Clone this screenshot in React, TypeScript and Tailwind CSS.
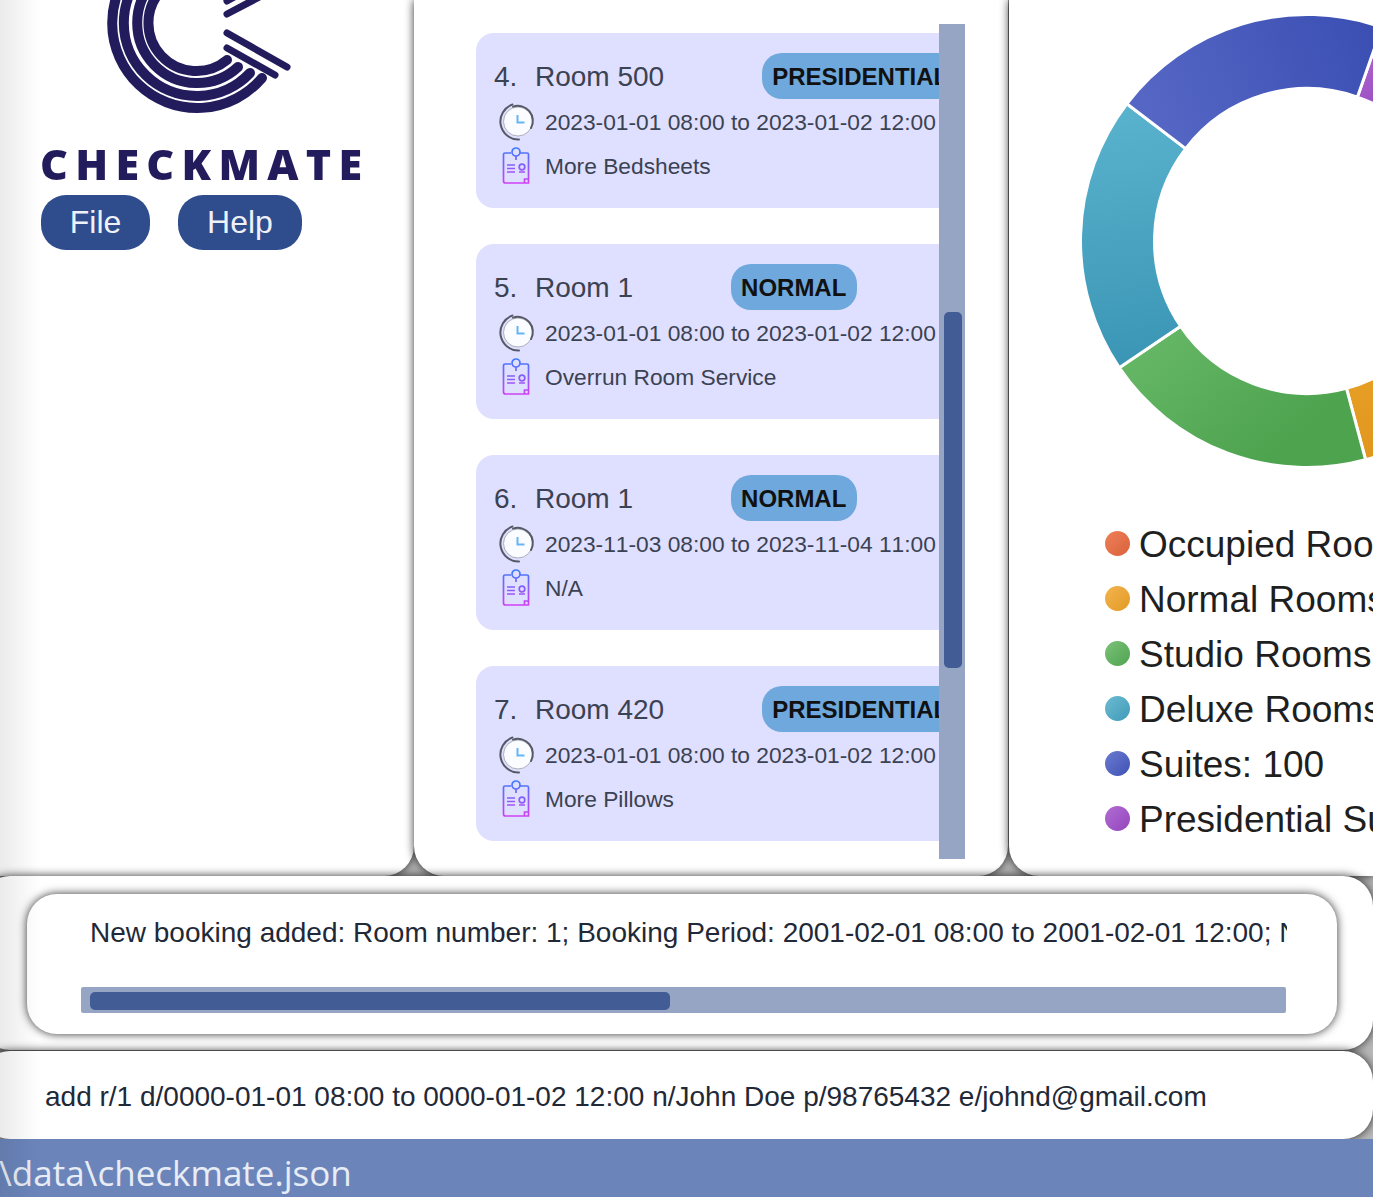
const bookings = [
  { no: "4.", room: "Room 500", type: "PRESIDENTIAL", period: "2023-01-01 08:00 to 2023-01-02 12:00", note: "More Bedsheets" },
  { no: "5.", room: "Room 1", type: "NORMAL", period: "2023-01-01 08:00 to 2023-01-02 12:00", note: "Overrun Room Service" },
  { no: "6.", room: "Room 1", type: "NORMAL", period: "2023-11-03 08:00 to 2023-11-04 11:00", note: "N/A" },
  { no: "7.", room: "Room 420", type: "PRESIDENTIAL", period: "2023-01-01 08:00 to 2023-01-02 12:00", note: "More Pillows" },
];

const legend = [
  { label: "Occupied Rooms", dot: "from-[#ef8059] to-[#d9623c]" },
  { label: "Normal Rooms", dot: "from-[#f3b44e] to-[#e39a20]" },
  { label: "Studio Rooms", dot: "from-[#7cc27a] to-[#4fa34f]" },
  { label: "Deluxe Rooms", dot: "from-[#6cbcd2] to-[#3f9ab8]" },
  { label: "Suites: 100", dot: "from-[#6a7bd0] to-[#4152b4]" },
  { label: "Presidential Suites", dot: "from-[#b26cd2] to-[#9346bd]" },
];

const slices = [
  { from: 19.3, to: 60, fill: "url(#purple)" },
  { from: 60, to: 120, fill: "#e5684a" },
  { from: 120, to: 165, fill: "url(#orange)" },
  { from: 165, to: 236, fill: "url(#green)" },
  { from: 236, to: 307.3, fill: "url(#teal)" },
  { from: 307.3, to: 379.3, fill: "url(#blue)" },
];

function point(r: number, deg: number) {
  const a = (deg * Math.PI) / 180;
  return `${225 + r * Math.sin(a)} ${225 - r * Math.cos(a)}`;
}

function slicePath(from: number, to: number) {
  return `M${point(226.5, from)} A226.5 226.5 0 0 1 ${point(226.5, to)} L${point(152.5, to)} A152.5 152.5 0 0 0 ${point(152.5, from)} Z`;
}

function Donut() {
  return (
    <svg viewBox="0 0 450 450" className="ml-[73px] mt-[16px] h-[450px] w-[450px] shrink-0 overflow-visible">
      <defs>
        <linearGradient id="blue" gradientUnits="userSpaceOnUse" x1="70" y1="100" x2="290" y2="10">
          <stop offset="0" stopColor="#5566c4" />
          <stop offset="1" stopColor="#3b4fb3" />
        </linearGradient>
        <linearGradient id="teal" gradientUnits="userSpaceOnUse" x1="30" y1="90" x2="70" y2="350">
          <stop offset="0" stopColor="#5ab3cd" />
          <stop offset="1" stopColor="#3a95b5" />
        </linearGradient>
        <linearGradient id="green" gradientUnits="userSpaceOnUse" x1="80" y1="310" x2="190" y2="440">
          <stop offset="0" stopColor="#65b765" />
          <stop offset="1" stopColor="#4ea34f" />
        </linearGradient>
        <linearGradient id="orange" gradientUnits="userSpaceOnUse" x1="270" y1="380" x2="290" y2="450">
          <stop offset="0" stopColor="#e69d24" />
          <stop offset="1" stopColor="#e0961c" />
        </linearGradient>
        <linearGradient id="purple" gradientUnits="userSpaceOnUse" x1="280" y1="60" x2="300" y2="90">
          <stop offset="0" stopColor="#a85ccb" />
          <stop offset="1" stopColor="#9a4fc2" />
        </linearGradient>
      </defs>
      {slices.map((s) => (
        <path key={s.from} d={slicePath(s.from, s.to)} fill={s.fill} stroke="#ffffff" strokeWidth="3" />
      ))}
    </svg>
  );
}

function Logo() {
  return (
    <svg viewBox="0 0 414 130" className="h-[130px] w-[414px] shrink-0 blur-[0.6px]" fill="none" stroke="#231c5c" strokeLinecap="round">
      <g strokeWidth="10">
        <path d="M227 60 A48 48 0 1 1 227 -14" />
        <path d="M238 67 A60 60 0 1 1 238 -21" />
        <path d="M250 73 A73 73 0 1 1 250 -27" />
        <path d="M262 78 A85 85 0 1 1 262 -32" />
      </g>
      <g strokeWidth="7">
        <path d="M227 33 L287 67" />
        <path d="M227 48 L275 75" />
        <path d="M227 14 L265 -6" />
        <path d="M227 1 L245 -9" />
      </g>
    </svg>
  );
}

function ClockIcon() {
  return (
    <svg viewBox="0 0 38 38" className="-ml-px h-[38px] w-[38px] shrink-0" fill="none">
      <circle cx="21" cy="18.5" r="14.5" fill="#fbfcff" stroke="#9a9da8" strokeWidth="0.8" />
      <path d="M16 3.6 A15 15 0 0 1 34 25" stroke="#555a66" strokeWidth="2" strokeLinecap="round" />
      <path d="M15.5 1.5 A18 18 0 0 0 22 36.5" stroke="#555a66" strokeWidth="2" strokeLinecap="round" />
      <path d="M20.5 12 V19.5 H27.5" stroke="#64b5f6" strokeWidth="2" />
    </svg>
  );
}

function NoteIcon() {
  return (
    <svg viewBox="0 0 30 38" className="h-[38px] w-[30px] shrink-0" fill="none">
      <defs>
        <linearGradient id="note" gradientUnits="userSpaceOnUse" x1="15" y1="0" x2="15" y2="38">
          <stop offset="0" stopColor="#3a7cff" />
          <stop offset="1" stopColor="#d63ff5" />
        </linearGradient>
      </defs>
      <g stroke="url(#note)" strokeWidth="1.7">
        <path d="M10 6 H4 Q2.5 6 2.5 7.5 V34 Q2.5 36 4.5 36 H27.5 V7.5 Q27.5 6 26 6 H19" />
        <circle cx="15" cy="5" r="4" />
        <path d="M15 9 V13" />
        <path d="M23.5 36 V32 H27.5" />
        <path d="M6 18 H14 M6 21.5 H14 M6 25 H14 M18 25 H24" />
        <circle cx="21" cy="20" r="2.8" />
      </g>
    </svg>
  );
}

function BookingCard({ no, room, type, period, note }: (typeof bookings)[number]) {
  return (
    <div className="h-[175px] w-[500px] shrink-0 rounded-[18px] bg-[#dfdfff] pl-[18px] text-[#3b4252]">
      <div className="flex h-[66px] items-end">
        <div className="flex h-[46px] items-center">
          <span className="w-[41px] pt-[2px] text-[28px]">{no}</span>
          <span className="pt-[2px] text-[28px]">{room}</span>
          <span className="ml-[98px] flex h-[46px] items-center rounded-[20px] bg-[#6fa8dc] pl-[10px] pr-[11px] pt-[2px] text-[24px] font-bold text-[#111111]">
            {type}
          </span>
        </div>
      </div>
      <div className="flex h-[46px] items-center pl-[4px]">
        <ClockIcon />
        <span className="ml-[10px] whitespace-nowrap text-[22.75px]">{period}</span>
      </div>
      <div className="flex h-[44px] items-center pb-[2px] pl-[7px]">
        <NoteIcon />
        <span className="ml-[14px] whitespace-nowrap text-[22.75px]">{note}</span>
      </div>
    </div>
  );
}

export default function App() {
  return (
    <div className="relative flex h-[1197px] w-full flex-col overflow-hidden bg-[#b8b8b8] font-['Liberation_Sans',Arial,sans-serif] [font-kerning:none]">
      <div className="flex h-[876px] shrink-0">
        {/* menu side */}
        <div className="w-[414px] shrink-0 rounded-br-[30px] bg-white shadow-[0_0_10px_rgba(0,0,0,0.8)]">
          <Logo />
          <div className="mt-[11px] pl-[40px] font-['Open_Sans',sans-serif] text-[43px] font-extrabold leading-[46px] tracking-[7.3px] text-[#231c5c] blur-[0.7px]">
            CHECKMATE
          </div>
          <div className="mt-[8px] flex gap-[28px] pl-[41px]">
            <div className="flex h-[55px] w-[109px] items-center justify-center rounded-[25px] bg-[#2f4c8d] pb-[2px] text-[32px] text-[#eef1f8]">File</div>
            <div className="flex h-[55px] w-[124px] items-center justify-center rounded-[25px] bg-[#2f4c8d] pb-[2px] text-[32px] text-[#eef1f8]">Help</div>
          </div>
        </div>

        {/* booking list */}
        <div className="w-[594px] shrink-0 rounded-b-[30px] bg-white pl-[62px] pt-[24px] shadow-[0_0_10px_rgba(0,0,0,0.8)]">
          <div className="flex h-[835px] w-[489px]">
            <div className="flex w-[463px] flex-col gap-[36px] overflow-hidden pt-[9px]">
              {bookings.map((b) => (
                <BookingCard key={b.no} {...b} />
              ))}
            </div>
            <div className="w-[26px] bg-[#97a5c5] pl-[5px] pt-[288px]">
              <div className="h-[356px] w-[18px] rounded-[5px] bg-[#425d95]" />
            </div>
          </div>
        </div>

        {/* room stats */}
        <div className="ml-px min-w-0 flex-1 overflow-hidden rounded-bl-[30px] bg-white shadow-[0_0_10px_rgba(0,0,0,0.8)]">
          <Donut />
          <div className="ml-[96px] mt-[50px] flex w-[400px] flex-col">
            {legend.map((l) => (
              <div key={l.label} className="flex h-[55px] items-center whitespace-nowrap text-[37px] text-[#1f1f1f]">
                <span className={`mr-[9px] h-[25px] w-[25px] shrink-0 rounded-full bg-gradient-to-br ${l.dot}`} />
                <span className="pt-[3px]">{l.label}</span>
              </div>
            ))}
          </div>
        </div>
      </div>

      {/* result box */}
      <div className="-ml-[20px] h-[174px] w-[1393px] shrink-0 rounded-[30px] bg-white pl-[47px] pt-[18px] shadow-[0_0_10px_rgba(0,0,0,0.8)]">
        <div className="h-[140px] w-[1310px] rounded-[30px] bg-white pl-[54px] pt-[20px] shadow-[0_0_10px_rgba(0,0,0,0.8)]">
          <div className="w-[1206px] overflow-hidden whitespace-nowrap pl-[9px] text-[28px] leading-[38px] text-[#1f2937]">
            New booking added: Room number: 1; Booking Period: 2001-02-01 08:00 to 2001-02-01 12:00; Name: John Doe
          </div>
          <div className="mt-[35px] h-[26px] w-[1205px] rounded-[2px] bg-[#97a5c5] pl-[9px] pt-[5px]">
            <div className="h-[18px] w-[580px] rounded-[5px] bg-[#425d95]" />
          </div>
        </div>
      </div>

      {/* command box */}
      <div className="-ml-[20px] mt-px flex h-[88px] w-[1393px] shrink-0 items-center rounded-[30px] bg-white pl-[65px] pt-[3px] text-[28px] text-[#1f2937] shadow-[0_0_10px_rgba(0,0,0,0.8)]">
        add r/1 d/0000-01-01 08:00 to 0000-01-02 12:00 n/John Doe p/98765432 e/johnd@gmail.com
      </div>

      {/* status bar */}
      <div className="flex h-[58px] shrink-0 items-center overflow-hidden bg-[#6b85bb] pt-[10px] font-['Open_Sans',sans-serif] text-[35px] text-[#e8ecf5]">
        <span className="-ml-[1px]">\data\checkmate.json</span>
      </div>

      <div className="pointer-events-none absolute inset-y-0 left-0 w-[40px] bg-gradient-to-r from-black/[0.08] to-transparent" />
    </div>
  );
}
